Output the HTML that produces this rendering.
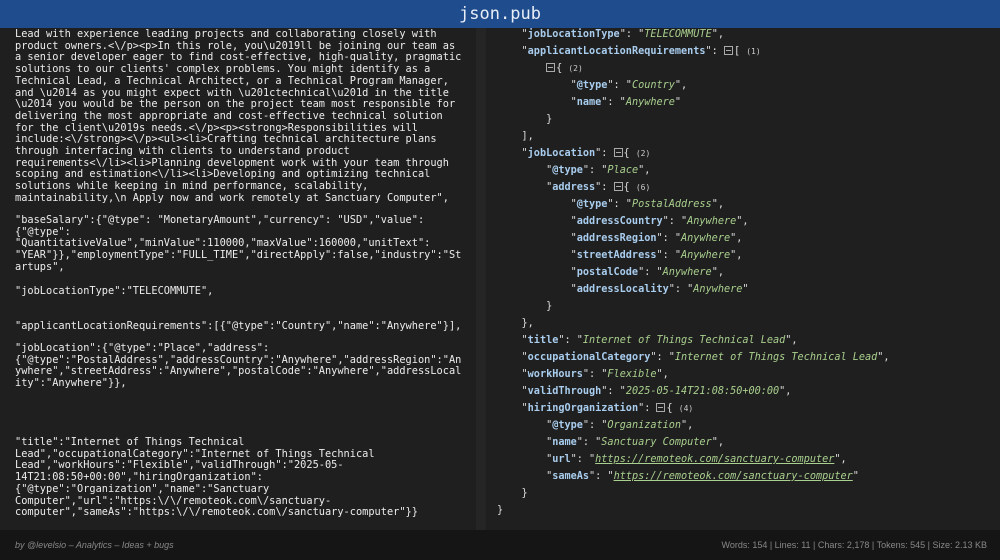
<!DOCTYPE html>
<html><head><meta charset="utf-8"><style>
body{margin:0;width:1000px;height:560px;background:#1e1e1e;overflow:hidden;font-family:"Liberation Mono",monospace;position:relative}
.hdr{position:absolute;left:0;top:0;width:1000px;height:28px;background:#1f4c8d;color:#e8eef8;font-size:17px;text-align:center;line-height:28px;font-family:"DejaVu Sans Mono",monospace}
.left{position:absolute;left:0;top:28px;width:476px;height:502px;background:#1f1f1f;overflow:hidden}
.div{position:absolute;left:476px;top:28px;width:10px;height:502px;background:#252525}
.right{position:absolute;left:486px;top:28px;width:514px;height:502px;background:#1f1f1f;overflow:hidden}
.lt{position:absolute;left:15px;font-size:10.3px;line-height:11.7px;color:#ececec;white-space:pre;margin:0}
.rt{position:absolute;left:11px;top:-2px;font-size:10.2px;line-height:17px;color:#ddd;white-space:pre;margin:0}
.k{color:#a9cdee;font-weight:bold}
.v{color:#a9d08e;font-style:italic}
.u{text-decoration:underline}
.b{display:inline-block;width:9px;height:9px;border:1px solid #aaa;box-sizing:border-box;vertical-align:-1px;position:relative;margin-right:1px}
.b:after{content:"";position:absolute;left:1px;right:1px;top:3px;height:1px;background:#aaa}
.c{font-size:8px;color:#ccc}
.ft{position:absolute;left:0;top:530px;width:1000px;height:30px;background:#151515;color:#888;font-size:9px;line-height:30px;font-family:"Liberation Sans Narrow","Liberation Sans",sans-serif}
</style></head><body>
<div class="hdr">json.pub</div>
<div class="left">
<pre class="lt" style="top:1px">Lead with experience leading projects and collaborating closely with
product owners.&lt;\/p&gt;&lt;p&gt;In this role, you\u2019ll be joining our team as
a senior developer eager to find cost-effective, high-quality, pragmatic
solutions to our clients' complex problems. You might identify as a
Technical Lead, a Technical Architect, or a Technical Program Manager,
and \u2014 as you might expect with \u201ctechnical\u201d in the title
\u2014 you would be the person on the project team most responsible for
delivering the most appropriate and cost-effective technical solution
for the client\u2019s needs.&lt;\/p&gt;&lt;p&gt;&lt;strong&gt;Responsibilities will
include:&lt;\/strong&gt;&lt;\/p&gt;&lt;ul&gt;&lt;li&gt;Crafting technical architecture plans
through interfacing with clients to understand product
requirements&lt;\/li&gt;&lt;li&gt;Planning development work with your team through
scoping and estimation&lt;\/li&gt;&lt;li&gt;Developing and optimizing technical
solutions while keeping in mind performance, scalability,
maintainability,\n Apply now and work remotely at Sanctuary Computer",</pre>
<pre class="lt" style="top:187px">"baseSalary":{"@type": "MonetaryAmount","currency": "USD","value":
{"@type":
"QuantitativeValue","minValue":110000,"maxValue":160000,"unitText":
"YEAR"}},"employmentType":"FULL_TIME","directApply":false,"industry":"St
artups",</pre>
<pre class="lt" style="top:258px">"jobLocationType":"TELECOMMUTE",</pre>
<pre class="lt" style="top:293px">"applicantLocationRequirements":[{"@type":"Country","name":"Anywhere"}],</pre>
<pre class="lt" style="top:315px">"jobLocation":{"@type":"Place","address":
{"@type":"PostalAddress","addressCountry":"Anywhere","addressRegion":"An
ywhere","streetAddress":"Anywhere","postalCode":"Anywhere","addressLocal
ity":"Anywhere"}},</pre>
<pre class="lt" style="top:409px">"title":"Internet of Things Technical
Lead","occupationalCategory":"Internet of Things Technical
Lead","workHours":"Flexible","validThrough":"2025-05-
14T21:08:50+00:00","hiringOrganization":
{"@type":"Organization","name":"Sanctuary
Computer","url":"https:\/\/remoteok.com\/sanctuary-
computer","sameAs":"https:\/\/remoteok.com\/sanctuary-computer"}}</pre>
</div>
<div class="div"></div>
<div class="right">
<pre class="rt">    "<span class="k">jobLocationType</span>": "<span class="v">TELECOMMUTE</span>",
    "<span class="k">applicantLocationRequirements</span>": <span class="b"></span>[ <span class="c">(1)</span>
        <span class="b"></span>{ <span class="c">(2)</span>
            "<span class="k">@type</span>": "<span class="v">Country</span>",
            "<span class="k">name</span>": "<span class="v">Anywhere</span>"
        }
    ],
    "<span class="k">jobLocation</span>": <span class="b"></span>{ <span class="c">(2)</span>
        "<span class="k">@type</span>": "<span class="v">Place</span>",
        "<span class="k">address</span>": <span class="b"></span>{ <span class="c">(6)</span>
            "<span class="k">@type</span>": "<span class="v">PostalAddress</span>",
            "<span class="k">addressCountry</span>": "<span class="v">Anywhere</span>",
            "<span class="k">addressRegion</span>": "<span class="v">Anywhere</span>",
            "<span class="k">streetAddress</span>": "<span class="v">Anywhere</span>",
            "<span class="k">postalCode</span>": "<span class="v">Anywhere</span>",
            "<span class="k">addressLocality</span>": "<span class="v">Anywhere</span>"
        }
    },
    "<span class="k">title</span>": "<span class="v">Internet of Things Technical Lead</span>",
    "<span class="k">occupationalCategory</span>": "<span class="v">Internet of Things Technical Lead</span>",
    "<span class="k">workHours</span>": "<span class="v">Flexible</span>",
    "<span class="k">validThrough</span>": "<span class="v">2025-05-14T21:08:50+00:00</span>",
    "<span class="k">hiringOrganization</span>": <span class="b"></span>{ <span class="c">(4)</span>
        "<span class="k">@type</span>": "<span class="v">Organization</span>",
        "<span class="k">name</span>": "<span class="v">Sanctuary Computer</span>",
        "<span class="k">url</span>": "<span class="v u">https://remoteok.com/sanctuary-computer</span>",
        "<span class="k">sameAs</span>": "<span class="v u">https://remoteok.com/sanctuary-computer</span>"
    }
}</pre>
</div>
<div class="ft"><span style="position:absolute;left:15px;font-style:italic">by @levelsio – Analytics – Ideas + bugs</span><span style="position:absolute;right:13px">Words: 154 | Lines: 11 | Chars: 2,178 | Tokens: 545 | Size: 2.13 KB</span></div>
</body></html>
